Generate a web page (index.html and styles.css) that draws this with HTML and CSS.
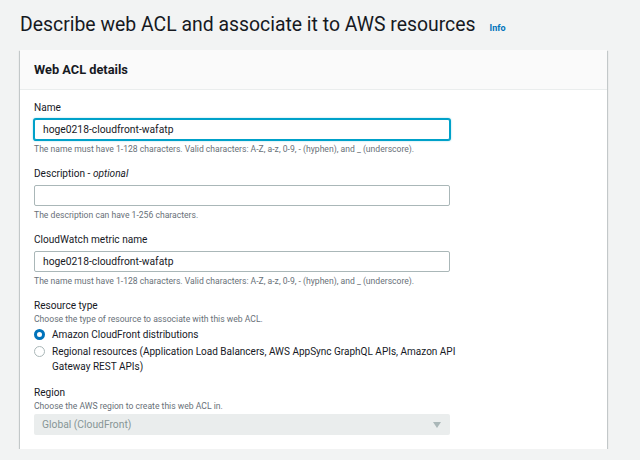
FILE: index.html
```html
<!DOCTYPE html>
<html lang="en">
<head>
  <meta charset="UTF-8">
  <title>Describe web ACL</title>
  <link rel="stylesheet" href="styles.css">
</head>
<body>

<div class="page">
  <div class="title-row">
    <h1>Describe web ACL and associate it to AWS resources</h1>
    <a class="info" href="#">Info</a>
  </div>

  <div class="card">
    <div class="card-header">Web ACL details</div>
    <div class="card-body">

      <div class="field">
        <div class="label">Name</div>
        <input type="text" class="input focused" value="hoge0218-cloudfront-wafatp">
        <div class="hint">The name must have 1-128 characters. Valid characters: A-Z, a-z, 0-9, - (hyphen), and _ (underscore).</div>
      </div>

      <div class="field">
        <div class="label">Description - <i>optional</i></div>
        <input type="text" class="input" value="">
        <div class="hint">The description can have 1-256 characters.</div>
      </div>

      <div class="field">
        <div class="label">CloudWatch metric name</div>
        <input type="text" class="input" value="hoge0218-cloudfront-wafatp">
        <div class="hint">The name must have 1-128 characters. Valid characters: A-Z, a-z, 0-9, - (hyphen), and _ (underscore).</div>
      </div>

      <div class="field">
        <div class="label">Resource type</div>
        <div class="desc">Choose the type of resource to associate with this web ACL.</div>
        <div class="radios">
          <div class="radio checked">
            <span class="dot"></span>
            <span class="radio-text">Amazon CloudFront distributions</span>
          </div>
          <div class="radio">
            <span class="dot"></span>
            <span class="radio-text">Regional resources (Application Load Balancers, AWS AppSync GraphQL APIs, Amazon API Gateway REST APIs)</span>
          </div>
        </div>
      </div>

      <div class="field last">
        <div class="label">Region</div>
        <div class="desc">Choose the AWS region to create this web ACL in.</div>
        <div class="select">
          <span>Global (CloudFront)</span>
          <span class="caret"></span>
        </div>
      </div>

    </div>
  </div>
</div>

</body>
</html>
```

FILE: styles.css
```css
body {
  margin: 0;
  background: #f2f3f3;
  color: #16191f;
  font-family: Roboto, "Liberation Sans", sans-serif;
}
.page { padding: 12px 0 0 20px; }

.title-row {
  display: flex;
  align-items: baseline;
  height: 38px;
}
h1 {
  margin: 0;
  font-size: 19.4px;
  font-weight: 400;
  line-height: 26px;
}
.info {
  margin-left: 14px;
  font-size: 9px;
  font-weight: 700;
  color: #0073bb;
  text-decoration: none;
}

.card {
  width: 587px;
  background: #fff;
  box-shadow: 0 1px 1px 0 rgba(0, 28, 36, .3), 1px 1px 1px 0 rgba(0, 28, 36, .15), -1px 1px 1px 0 rgba(0, 28, 36, .15);
}
.card-header {
  height: 39px;
  line-height: 40px;
  padding-left: 14px;
  background: #fafafa;
  border-bottom: 1px solid #eaeded;
  font-size: 12.8px;
  font-weight: 700;
}
.card-body { padding: 11px 14px 14px; }

.field { margin-bottom: 12px; }
.field.last { margin-bottom: 0; }
.label {
  font-size: 10.1px;
  line-height: 14px;
}
.hint, .desc {
  font-size: 8.6px;
  line-height: 12px;
  color: #687078;
}
.hint { margin-top: 3px; }

.input {
  display: block;
  box-sizing: border-box;
  width: 416px;
  height: 21px;
  margin: 4px 0 0;
  padding: 0 8px;
  border: 1px solid #aab7b8;
  border-radius: 2px;
  font: 10.3px Roboto, "Liberation Sans", sans-serif;
  color: #16191f;
  outline: none;
}
.input.focused {
  border-color: #00a1c9;
  box-shadow: 0 0 0 1px #00a1c9, 0 0 2px 1px rgba(0, 161, 201, .4);
}

.radios {
  margin-top: 2px;
  display: flex;
  flex-direction: column;
  gap: 2px;
}
.radio {
  display: flex;
  align-items: flex-start;
  font-size: 10px;
  line-height: 15px;
}
.radio-text { width: 412px; }
.dot {
  box-sizing: border-box;
  flex: none;
  width: 11px;
  height: 11px;
  margin: 2px 7px 0 0;
  border: 1px solid #aab7b8;
  border-radius: 50%;
  background: #fff;
}
.radio.checked .dot { border: 3.5px solid #0073bb; }

.select {
  display: flex;
  align-items: center;
  justify-content: space-between;
  box-sizing: border-box;
  width: 416px;
  height: 21px;
  margin-top: 2px;
  padding: 0 9px 0 8px;
  background: #eaeded;
  border-radius: 2px;
  font-size: 10.3px;
  color: #879596;
}
.caret {
  width: 0;
  height: 0;
  border-left: 4.5px solid transparent;
  border-right: 4.5px solid transparent;
  border-top: 6px solid #aab7b8;
}
```
